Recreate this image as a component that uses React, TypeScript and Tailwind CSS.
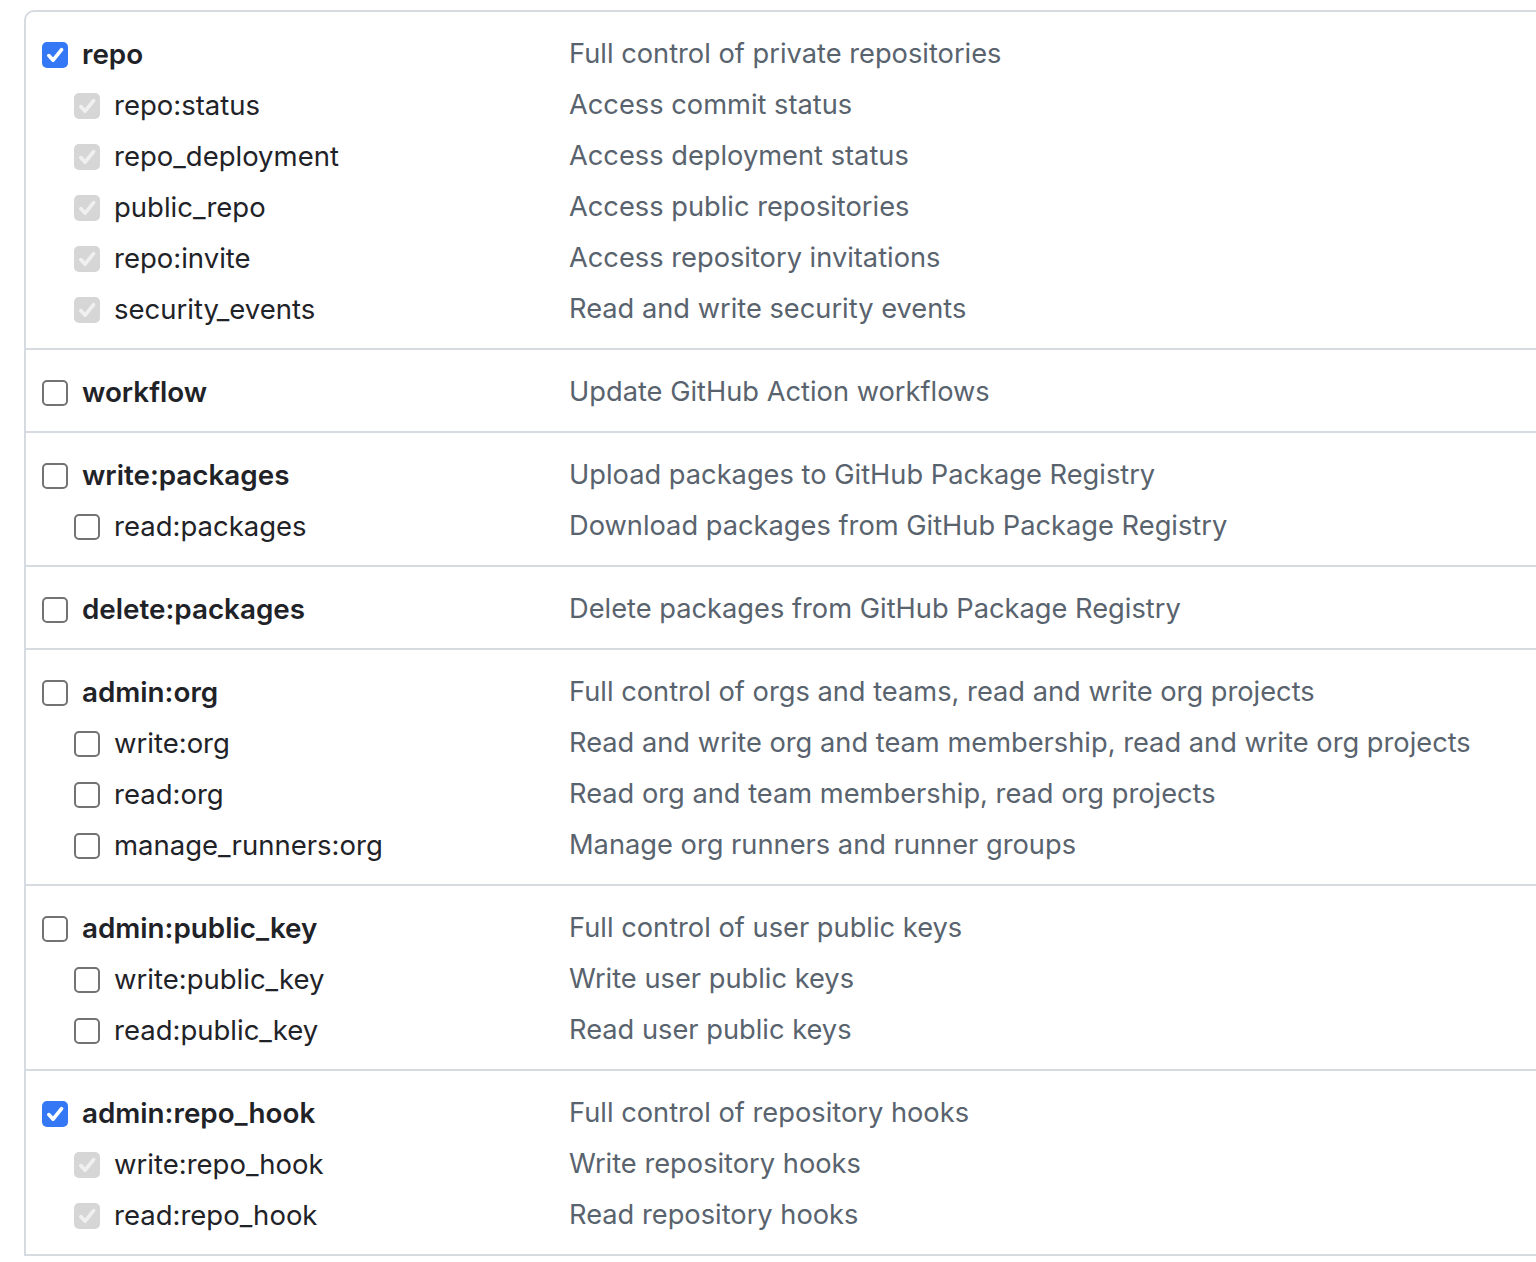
import React from "react";

type Scope = {
  name: string;
  desc: string;
  state: "checked" | "unchecked" | "disabled";
  sub?: boolean;
};

const GROUPS: Scope[][] = [
  [
    { name: "repo", desc: "Full control of private repositories", state: "checked" },
    { name: "repo:status", desc: "Access commit status", state: "disabled", sub: true },
    { name: "repo_deployment", desc: "Access deployment status", state: "disabled", sub: true },
    { name: "public_repo", desc: "Access public repositories", state: "disabled", sub: true },
    { name: "repo:invite", desc: "Access repository invitations", state: "disabled", sub: true },
    { name: "security_events", desc: "Read and write security events", state: "disabled", sub: true },
  ],
  [{ name: "workflow", desc: "Update GitHub Action workflows", state: "unchecked" }],
  [
    { name: "write:packages", desc: "Upload packages to GitHub Package Registry", state: "unchecked" },
    { name: "read:packages", desc: "Download packages from GitHub Package Registry", state: "unchecked", sub: true },
  ],
  [{ name: "delete:packages", desc: "Delete packages from GitHub Package Registry", state: "unchecked" }],
  [
    { name: "admin:org", desc: "Full control of orgs and teams, read and write org projects", state: "unchecked" },
    { name: "write:org", desc: "Read and write org and team membership, read and write org projects", state: "unchecked", sub: true },
    { name: "read:org", desc: "Read org and team membership, read org projects", state: "unchecked", sub: true },
    { name: "manage_runners:org", desc: "Manage org runners and runner groups", state: "unchecked", sub: true },
  ],
  [
    { name: "admin:public_key", desc: "Full control of user public keys", state: "unchecked" },
    { name: "write:public_key", desc: "Write user public keys", state: "unchecked", sub: true },
    { name: "read:public_key", desc: "Read user public keys", state: "unchecked", sub: true },
  ],
  [
    { name: "admin:repo_hook", desc: "Full control of repository hooks", state: "checked" },
    { name: "write:repo_hook", desc: "Write repository hooks", state: "disabled", sub: true },
    { name: "read:repo_hook", desc: "Read repository hooks", state: "disabled", sub: true },
  ],
];

function CheckMark({ color }: { color: string }) {
  return (
    <svg width="26" height="26" viewBox="0 0 26 26" fill="none">
      <path
        d="M6.8 13.6l4.3 4.6L19.6 7.6"
        stroke={color}
        strokeWidth="3.6"
        strokeLinecap="round"
        strokeLinejoin="round"
      />
    </svg>
  );
}

function Checkbox({ state }: { state: Scope["state"] }) {
  if (state === "checked") {
    return (
      <span className="flex h-[26px] w-[26px] shrink-0 items-center justify-center rounded-[5px] bg-[#3478f6]">
        <CheckMark color="#ffffff" />
      </span>
    );
  }
  if (state === "disabled") {
    return (
      <span className="flex h-[26px] w-[26px] shrink-0 items-center justify-center rounded-[5px] bg-[#d6d6d6]">
        <CheckMark color="#f0f0f0" />
      </span>
    );
  }
  return (
    <span className="h-[26px] w-[26px] shrink-0 rounded-[5px] border-2 border-[#737373] bg-white" />
  );
}

function ScopeRow({ scope }: { scope: Scope }) {
  return (
    <div className="flex h-[51px] items-center">
      <div className={`flex w-[527px] shrink-0 items-center gap-[14px] ${scope.sub ? "pl-[32px]" : ""}`}>
        <Checkbox state={scope.state} />
        <span
          className={`whitespace-nowrap text-[#1f2328] ${scope.sub ? "text-[27.5px] font-normal" : "text-[27.8px] font-semibold"}`}
        >
          {scope.name}
        </span>
      </div>
      <span className="whitespace-nowrap text-[27.25px] text-[#59636e]">{scope.desc}</span>
    </div>
  );
}

export default function App() {
  return (
    <div
      className="h-[1262px] w-[1536px] overflow-hidden bg-white pl-[24px] pt-[10px]"
      style={{ fontFamily: "Inter, 'Noto Sans', 'Liberation Sans', sans-serif" }}
    >
      <div className="w-[1560px] rounded-tl-[10px] border-2 border-[#d5dbe1]">
        {GROUPS.map((group, i) => (
          <div
            key={i}
            className={`pb-[13px] pl-[16px] pt-[17px] ${i > 0 ? "border-t-2 border-[#d5dbe1]" : ""}`}
          >
            {group.map((s) => (
              <ScopeRow key={s.name} scope={s} />
            ))}
          </div>
        ))}
      </div>
    </div>
  );
}
